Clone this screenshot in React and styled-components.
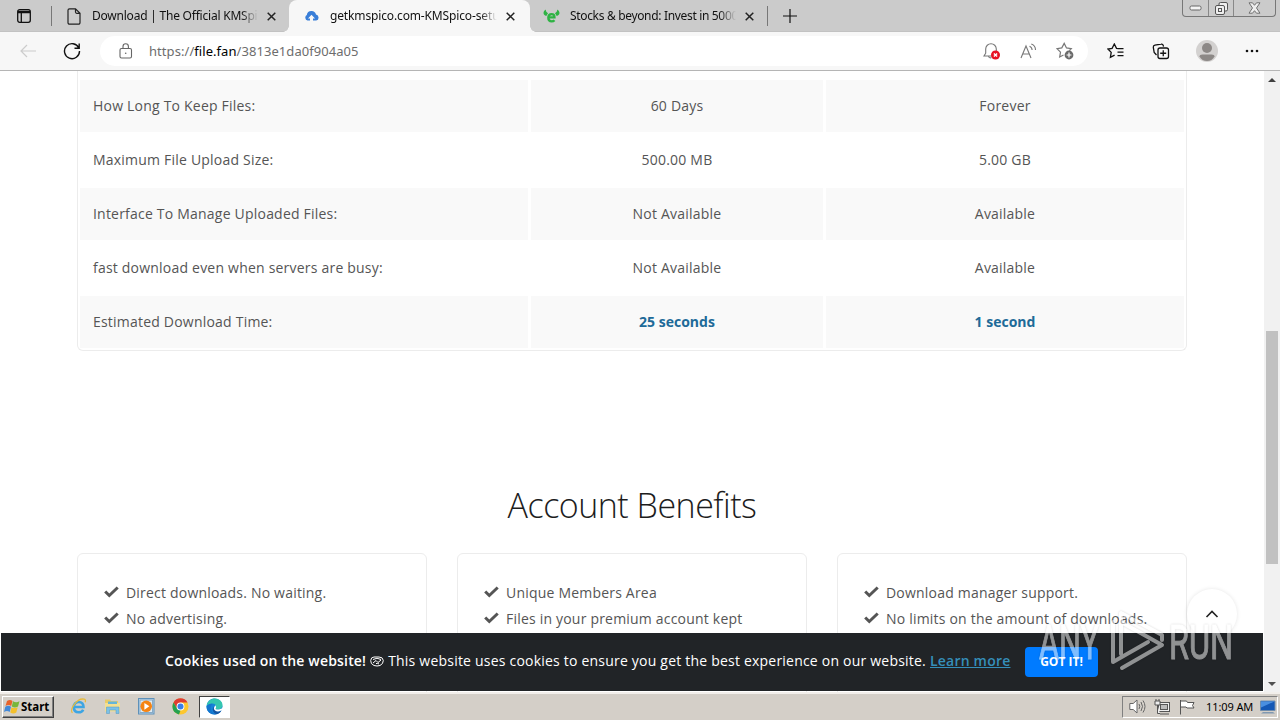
import styled, { createGlobalStyle } from 'styled-components'

const rows = [
  ['How Long To Keep Files:', '60 Days', 'Forever'],
  ['Maximum File Upload Size:', '500.00 MB', '5.00 GB'],
  ['Interface To Manage Uploaded Files:', 'Not Available', 'Available'],
  ['fast download even when servers are busy:', 'Not Available', 'Available'],
  ['Estimated Download Time:', '25 seconds', '1 second']
]

const benefits = [
  ['Direct downloads. No waiting.', 'No advertising.'],
  ['Unique Members Area', 'Files in your premium account kept'],
  ['Download manager support.', 'No limits on the amount of downloads.']
]

export default function App () {
  return (
    <Screen>
      <GlobalStyle />
      <TabBar />
      <Toolbar />
      <Viewport>
        <Page>
          <Table>
            {rows.map(([label, free, premium], i) => (
              <Row key={label} $striped={i % 2 === 0}>
                <Cell $left>{label}</Cell>
                <Cell $strong={i === 4}>{free}</Cell>
                <Cell $strong={i === 4}>{premium}</Cell>
              </Row>
            ))}
          </Table>
          <Heading>Account Benefits</Heading>
          <Cards>
            {benefits.map(items => (
              <Card key={items[0]}>
                {items.map(item => (
                  <Benefit key={item}>
                    <CheckIcon />
                    {item}
                  </Benefit>
                ))}
              </Card>
            ))}
          </Cards>
          <ScrollTop>
            <svg width='14' height='10' viewBox='0 0 14 10' fill='none' stroke='#222' strokeWidth='1.6'>
              <path d='M1.5 8 7 2.5 12.5 8' />
            </svg>
          </ScrollTop>
          <CookieBar>
            <CookieText>
              <CookieTitle>Cookies used on the website!</CookieTitle>
              <CookieIcon />
              <CookieMessage>This website uses cookies to ensure you get the best experience on our website.</CookieMessage>
              <LearnMore>Learn more</LearnMore>
            </CookieText>
            <GotIt>GOT IT!</GotIt>
          </CookieBar>
        </Page>
        <ScrollBar>
          <Arrow viewBox='0 0 8 4'><path d='M0 4 4 0 8 4Z' fill='#404040' /></Arrow>
          <Track><Thumb /></Track>
          <Arrow viewBox='0 0 8 4'><path d='M0 0 4 4 8 0Z' fill='#505050' /></Arrow>
        </ScrollBar>
      </Viewport>
      <Taskbar />
      <Watermark />
    </Screen>
  )
}

function TabBar () {
  return (
    <Tabs>
      <TabMenu>
        <svg width='14' height='14' viewBox='0 0 14 14' fill='none' stroke='#111' strokeWidth='1.3'>
          <rect x='.7' y='.7' width='12.6' height='12.6' rx='2' />
          <path d='M1 2.3h12M1 3.6h12M4.3 4v9' />
        </svg>
      </TabMenu>
      <Separator />
      <Tab $width={237} $icon={15}>
        <svg width='14' height='17' viewBox='0 0 14 17' fill='none' stroke='#222' strokeWidth='1.2'>
          <path d='M2.5.8h6L13 5.3v9.4a1.5 1.5 0 0 1-1.5 1.5h-9A1.5 1.5 0 0 1 1 14.7V2.3A1.5 1.5 0 0 1 2.5.8zM8.5.8v3.3a1.2 1.2 0 0 0 1.2 1.2H13' />
        </svg>
        <TabTitle $width={166} $gap={11} $spacing={-0.22}>Download | The Official KMSpico</TabTitle>
        <CloseIcon />
      </Tab>
      <Tab $active $width={241} $icon={15}>
        <svg width='15' height='11' viewBox='0 0 15 11'>
          <path d='M3.5 9.5A3 3 0 0 1 2.8 4 4.7 4.7 0 0 1 12 3.6a3 3 0 0 1 .2 5.9H9V7.5h2L7.5 3.8 4 7.5h2v2z' fill='#397ed8' />
        </svg>
        <TabTitle $width={167} $gap={11} $spacing={-0.14}>getkmspico.com-KMSpico-setup</TabTitle>
        <CloseIcon />
      </Tab>
      <Tab $width={237} $icon={13}>
        <svg width='17' height='14' viewBox='0 0 17 14' fill='none'>
          <path d='M2.8.5C-.3 2.500-.3 5.800 3.300 7L5 4.200Q2.500 3 2.800.5zM14.200.5c3.100 2 3.100 5.300-.5 6.500L12 4.200q2.500-1.200 2.200-3.700z' fill='#2fb344' />
          <path d='M5.500 8.400h6c0-2-1.100-3.300-2.900-3.300-2 0-3.300 1.500-3.300 3.700s1.400 3.600 3.400 3.600c1.200 0 2.100-.4 2.800-1.200' stroke='#2fb344' strokeWidth='2.3' />
        </svg>
        <TabTitle $width={166} $gap={10} $spacing={-0.33}>Stocks &amp; beyond: Invest in 5000+</TabTitle>
        <CloseIcon />
      </Tab>
      <Separator />
      <NewTab>
        <svg width='14' height='14' viewBox='0 0 14 14' stroke='#111' strokeWidth='1.2'>
          <path d='M7 0v14M0 7h14' />
        </svg>
      </NewTab>
      <WindowButtons>
        <WindowButton $width={25}>
          <svg width='13' height='6' viewBox='0 0 13 6'><rect x='1' y='1' width='11' height='4' rx='1.5' fill='#f4f4f4' stroke='#666' /></svg>
        </WindowButton>
        <WindowButton $width={25}>
          <svg width='13' height='13' viewBox='0 0 13 13' fill='#eee' stroke='#555'>
            <rect x='4' y='.5' width='8.5' height='8.5' rx='1.5' />
            <rect x='.5' y='3.5' width='9' height='9' rx='1.5' />
            <rect x='3.5' y='6.5' width='3' height='3' />
          </svg>
        </WindowButton>
        <WindowButton $width={42}>
          <svg width='13' height='12' viewBox='0 0 13 12' fill='#eee' stroke='#666' strokeWidth='.9'>
            <path d='M1 .8h3.500l2 2.500 2-2.500H12L8.500 6l3.500 5.200H8.500l-2-2.500-2 2.500H1L4.500 6z' />
          </svg>
        </WindowButton>
      </WindowButtons>
    </Tabs>
  )
}

function Toolbar () {
  return (
    <ToolRow>
      <IconSlot $width={56}>
        <svg width='16' height='14' viewBox='0 0 16 14' fill='none' stroke='#ccc' strokeWidth='1.2'>
          <path d='M16 7H1M7 1 1 7l6 6' />
        </svg>
      </IconSlot>
      <IconSlot $width={31}>
        <svg width='18' height='18' viewBox='0 0 18 18' fill='none' stroke='#111' strokeWidth='1.4'>
          <path d='M15.8 6A7.5 7.5 0 1 0 16.5 9M16.2 1.5V6.3H11.5' />
        </svg>
      </IconSlot>
      <AddressBar>
        <svg width='14' height='16' viewBox='0 0 14 16' fill='none' stroke='#666' strokeWidth='1.1'>
          <rect x='1' y='5.5' width='11.5' height='9.5' rx='1.5' />
          <path d='M4 5.5V3.5a2.7 2.7 0 0 1 5.400 0v2' />
          <circle cx='6.7' cy='10.3' r='.8' fill='#666' stroke='none' />
        </svg>
        <Url>https://<b>file.fan</b>/3813e1da0f904a05</Url>
        <AddressIcons>
          <svg width='18' height='18' viewBox='0 0 18 18' fill='none' stroke='#777' strokeWidth='1.1'>
            <path d='M9 14H1l1.7-2.8V7a5.3 5.3 0 0 1 10.6 0v2M5.5 14a2 2 0 0 0 3 1.6' />
            <circle cx='12.5' cy='13' r='4.5' fill='#e81123' stroke='none' />
            <path d='m10.9 11.4 3.2 3.2m0-3.2-3.2 3.2' stroke='#fff' strokeWidth='1.4' />
          </svg>
          <svg width='17' height='17' viewBox='0 0 17 17' fill='none' stroke='#777' strokeWidth='1.1'>
            <path d='m1 15 5-12 5 12M2.9 11h6.2M9.5 3.2c1.8.8 2.6 2 2.6 3.8M11.3 1c2.8 1 4.2 3 4.2 6' />
          </svg>
          <svg width='18' height='18' viewBox='0 0 18 18' fill='none' stroke='#777' strokeWidth='1.2'>
            <path d='M7.5 13 3.7 15l.8-4.9L1 6.7l4.8-.8L8.2 1.4l2.3 4.5 4.8.8-2 2' />
            <circle cx='13' cy='13' r='4.4' fill='#6b6b6b' stroke='none' />
            <path d='M13 10.6v4.800M10.6 13h4.800' stroke='#fff' />
          </svg>
        </AddressIcons>
      </AddressBar>
      <ToolIcons>
        <svg width='18' height='16' viewBox='0 0 18 16' fill='none' stroke='#111' strokeWidth='1.3'>
          <path d='M11.5 5.7 9.5 5.3 7.3 1 5.1 5.3 1 6l3.2 3.4-.8 5 4.2-2.2M10 5.7h6.5M10.5 9.2h6M10.5 12.7h6' />
        </svg>
        <svg width='18' height='17' viewBox='0 0 18 17' fill='none' stroke='#111' strokeWidth='1.3'>
          <path d='M4.5 12 2.2 9.5 1.3 4.3a2 2 0 0 1 1.6-2.2L9 1.2a2 2 0 0 1 2.3 1.5l.2.9' />
          <rect x='6' y='5' width='10.5' height='10.5' rx='2' />
          <path d='M11.25 7.3v6M8.2 10.25h6' />
        </svg>
        <svg width='22' height='22' viewBox='0 0 22 22'>
          <circle cx='11' cy='11' r='11' fill='#d3d1d0' />
          <circle cx='11' cy='8' r='5' fill='#8c8886' />
          <path d='M3.5 16.5q0-2 3-2h9q3 0 3 2-2.5 4.5-7.5 4.5t-7.5-4.5z' fill='#8c8886' />
        </svg>
        <svg width='14' height='4' viewBox='0 0 14 4' fill='#111'>
          <circle cx='2' cy='2' r='1.3' /><circle cx='7' cy='2' r='1.3' /><circle cx='12' cy='2' r='1.3' />
        </svg>
      </ToolIcons>
    </ToolRow>
  )
}

function Taskbar () {
  return (
    <TaskRow>
      <StartButton>
        <svg width='16' height='15' viewBox='0 0 16 15'>
          <path d='M3 2q3-2 5.500 0L7.200 7Q4.500 5.200 1.500 7z' fill='#e8632b' />
          <path d='M9 2.300q3 1.800 6.500 0L14 7.500q-3 1.800-6.200 0z' fill='#78b63b' />
          <path d='M1.300 7.700Q4.300 5.900 7 7.700l-1.300 5.300Q3 11.200 0 13z' fill='#4389d8' />
          <path d='M7.500 8.200q3 1.800 6.200 0L12.300 13.500q-3 1.800-6 0z' fill='#f4c02c' />
        </svg>
        Start
      </StartButton>
      <TaskIcon $margin={16}>
        <svg width='17' height='17' viewBox='0 0 17 17' fill='none'>
          <path d='M4 9h9.500c0-3-1.700-5-4.700-5C5.700 4 3.800 6 3.800 9.300s2 5 4.900 5c2.100 0 3.700-.9 4.500-2.600' stroke='#3da5e3' strokeWidth='2.6' />
          <path d='M2.500 14.800C-1 12 7-.5 14.200 1.200c1.300.3 1.500 1.500 1 3' stroke='#e7bb3c' strokeWidth='1.3' />
        </svg>
      </TaskIcon>
      <TaskIcon $margin={17}>
        <svg width='17' height='17' viewBox='0 0 17 17'>
          <path d='M1 1.500h5l1 1.500h7V11H1z' fill='#e9cb67' />
          <path d='M1 5h15v8.500H1z' fill='#f3df91' />
          <path d='M4 3.500h9V6H4z' fill='#64b5d8' />
          <path d='M2.500 9h12.500v6.500h-3V12H5.500v3.500h-3z' fill='#7bc1e8' stroke='#5399c1' strokeWidth='.5' />
        </svg>
      </TaskIcon>
      <TaskIcon $margin={17}>
        <svg width='17' height='17' viewBox='0 0 17 17'>
          <rect x='.5' y='.5' width='15.5' height='15.5' fill='#b9d6ec' stroke='#5e91b9' />
          <rect x='2' y='2' width='12.5' height='12.5' fill='#dcebf5' stroke='#88aac5' />
          <circle cx='8.2' cy='8.3' r='5.8' fill='#f58413' />
          <path d='m6.400 5 5 3.300-5 3.400z' fill='#fff' />
        </svg>
      </TaskIcon>
      <TaskIcon $margin={17}>
        <svg width='17' height='17' viewBox='0 0 17 17'>
          <circle cx='8.5' cy='8.5' r='8' fill='#fdc72e' />
          <path d='M1.500 4.500A8 8 0 0 1 15.500 4.500H8.500v4.500L5 10.500z' fill='#df3d31' />
          <path d='M1.500 4.500 5 10.500l3.500 2-1.500 3.900A8 8 0 0 1 1.500 4.500z' fill='#25a150' />
          <circle cx='8.5' cy='8.5' r='3.9' fill='#fff' />
          <circle cx='8.5' cy='8.5' r='3' fill='#397fe9' />
        </svg>
      </TaskIcon>
      <ActiveTask>
        <svg width='17' height='17' viewBox='0 0 17 17'>
          <circle cx='8.5' cy='8.5' r='8' fill='#1683d8' />
          <path d='M.7 7C2 3 5 .5 8.700.5c4.500 0 7.800 3 7.800 6.600 0 3-2.200 4.400-4.500 4.400-2 0-3-.7-2.500-1.500 1-1.500.3-4.500-3-4.500C3.700 5.500 1.500 6.500.7 8z' fill='#35c6b0' />
          <path d='M6.500 6C3 9 5 15 10.500 16.200 6 17.500.3 14 .5 8.500 2 6.500 4.500 5.500 6.500 6z' fill='#1476ce' />
          <path d='M8 8.500c-1 3.500 3 6 7.300 4.200-1 1.800-2.700 3-4.500 3.500C7 15.500 5.500 11 8 8.500z' fill='#1355a3' />
          <path d='M9.200 7.300c1.300 1.300 1 2.400.4 3.200-.3 1 2.500 1.500 4.700.5l2.700-1v2l-2.400.7c-3 1.700-6.800.1-6.700-2.700z' fill='#fff' />
        </svg>
      </ActiveTask>
      <Tray>
        <svg width='17' height='15' viewBox='0 0 17 15' fill='#fff' stroke='#666'>
          <path d='M.8 4.500h3.400L8 1v13l-3.800-3.500H.8z' />
          <path d='M10 5q1.500 2.500 0 5M12 3q3 4.500 0 9M14 1.500q4 6 0 12' fill='none' />
        </svg>
        <svg width='17' height='16' viewBox='0 0 17 16' fill='#eee' stroke='#555'>
          <rect x='4.5' y='3.5' width='11' height='9' />
          <rect x='6.5' y='5.5' width='7' height='5' fill='#bbb' />
          <path d='M6 15h9M1 2h5v4H1zM2 0v2M5 0v2M3.500 6v8.500H6' />
        </svg>
        <svg width='16' height='16' viewBox='0 0 16 16' fill='#fff' stroke='#555'>
          <path d='M1.500 1v14.500M1.500 2h6l1 1.500H15l-1.500 3L15 9H8L7 8H1.500z' />
        </svg>
        <Clock>11:09 AM</Clock>
        <svg width='16' height='14' viewBox='0 0 16 14'>
          <path d='M.5 1h14.500v9.500H.5z' fill='#1558b5' stroke='#718dac' />
          <path d='M1 1.500h13.500L1 7.500z' fill='#4a8fe0' />
          <path d='M3 12h10l2 1.500H1z' fill='#8098b0' />
        </svg>
      </Tray>
    </TaskRow>
  )
}

function CloseIcon () {
  return (
    <svg width='9' height='9' viewBox='0 0 9 9' stroke='#222' strokeWidth='1.5'>
      <path d='m.7.7 7.600 7.600M8.300.7.7 8.300' />
    </svg>
  )
}

function CheckIcon () {
  return (
    <svg width='15' height='12' viewBox='0 0 15 12' fill='none' stroke='#555' strokeWidth='3'>
      <path d='M1.200 5.500 5.300 9.500 13.700 1.500' />
    </svg>
  )
}

function CookieIcon () {
  return (
    <svg width='14' height='11' viewBox='0 0 14 11' fill='none' stroke='#fff' strokeWidth='1'>
      <path d='M4 1Q1 1 .7 4.500T4 9.500q3 1 6 0 3.300-1.500 3.300-5Q13 1 9 1zM3 3.500q4-2.500 8 0M3 7l3-2.500 2 2 3-2.500M6 8l1-1 2 1' />
    </svg>
  )
}

function Watermark () {
  return (
    <Mark viewBox='0 0 200 64'>
      <g fill='#fff' stroke='#fff' strokeWidth='1' fontFamily='Roboto, sans-serif' fontSize='48'>
        <text x='1' y='51' textLength='60' lengthAdjust='spacingAndGlyphs'>ANY</text>
        <text x='131' y='51' textLength='64' lengthAdjust='spacingAndGlyphs'>RUN</text>
      </g>
      <g fill='none' stroke='#fff' strokeWidth='4' strokeLinejoin='round' strokeLinecap='round'>
        <path d='M83 46V14L124 37 84 60M75 14v40L110 34M83 14V5L124 27v5' />
      </g>
    </Mark>
  )
}

const GlobalStyle = createGlobalStyle`
  * {
    box-sizing: border-box;
  }
  body {
    margin: 0;
    overflow: hidden;
  }
  svg {
    flex: none;
    display: block;
  }
`

const Screen = styled.div`
  position: relative;
  display: flex;
  flex-direction: column;
  width: 1280px;
  height: 720px;
  overflow: hidden;
  font-family: 'Open Sans', sans-serif;
  background: #fff;
`

const Tabs = styled.div`
  display: flex;
  align-items: center;
  height: 32px;
  flex: none;
  background: #cbcbcb;
  border-bottom: 1px solid #c2c2c2;
`

const TabMenu = styled.div`
  width: 51px;
  padding-left: 17px;
`

const Separator = styled.div`
  width: 1px;
  height: 20px;
  background: #777;
`

const Tab = styled.div`
  position: relative;
  display: flex;
  align-items: center;
  align-self: stretch;
  width: ${p => p.$width}px;
  height: 32px;
  padding-left: ${p => p.$icon}px;
  border-radius: 8px 8px 0 0;
  background: ${p => p.$active ? '#f7f7f7' : 'transparent'};

  /* curved feet on both sides of the active tab */
  &::before,
  &::after {
    content: '';
    display: ${p => p.$active ? 'block' : 'none'};
    position: absolute;
    bottom: 0;
    width: 6px;
    height: 6px;
  }
  &::before {
    left: -6px;
    background: radial-gradient(circle at 0 0, transparent 5.5px, #f7f7f7 6px);
  }
  &::after {
    right: -6px;
    background: radial-gradient(circle at 100% 0, transparent 5.5px, #f7f7f7 6px);
  }
`

const TabTitle = styled.span`
  width: ${p => p.$width}px;
  margin-left: ${p => p.$gap}px;
  margin-right: 9px;
  overflow: hidden;
  white-space: nowrap;
  font: 12px/18px 'Noto Sans', sans-serif;
  letter-spacing: ${p => p.$spacing}px;
  color: #111;
  mask-image: linear-gradient(to right, #000 90%, transparent);
`

const NewTab = styled.div`
  padding-left: 15px;
`

const WindowButtons = styled.div`
  display: flex;
  align-self: flex-start;
  height: 17px;
  margin-left: auto;
  margin-right: 4px;
  border: 1px solid #777;
  border-top: 0;
  border-radius: 0 0 4px 4px;
`

const WindowButton = styled.div`
  display: flex;
  align-items: center;
  justify-content: center;
  width: ${p => p.$width}px;

  & + & {
    border-left: 1px solid #888;
  }
`

const ToolRow = styled.div`
  display: flex;
  align-items: center;
  height: 39px;
  flex: none;
  background: #f7f7f7;
  border-bottom: 1px solid #b5b5b5;
`

const IconSlot = styled.div`
  display: flex;
  justify-content: center;
  width: ${p => p.$width}px;
`

const AddressBar = styled.div`
  display: flex;
  align-items: center;
  width: 988px;
  height: 30px;
  margin-left: 13px;
  padding: 0 14px 0 19px;
  border-radius: 15px;
  background: #fff;
`

const Url = styled.span`
  margin-left: 16px;
  font: 13px/20px 'Noto Sans', sans-serif;
  letter-spacing: 0.06px;
  white-space: nowrap;
  color: #6d6d6d;

  b {
    font-weight: 400;
    color: #000;
  }
`

const AddressIcons = styled.div`
  display: flex;
  align-items: center;
  gap: 19px;
  margin-left: auto;
`

const ToolIcons = styled.div`
  display: flex;
  align-items: center;
  justify-content: space-between;
  width: 152px;
  margin-left: 19px;
`

const Viewport = styled.div`
  display: flex;
  height: 621px;
  flex: none;
`

const Page = styled.div`
  position: relative;
  width: 1264px;
  height: 621px;
  padding: 0 77px;
  overflow: hidden;
`

const Table = styled.div`
  width: 1110px;
  height: 280px;
  padding: 9px 2px 0;
  border: 1px solid #ececec;
  border-top: 0;
  border-radius: 0 0 6px 6px;
`

const Row = styled.div`
  display: grid;
  grid-template-columns: 448px 292px 358px;
  column-gap: 3px;
  height: 52px;
  margin-bottom: 2px;

  & > div {
    background: ${p => p.$striped ? '#f9f9f9' : '#fff'};
  }
`

const Cell = styled.div`
  display: flex;
  align-items: center;
  justify-content: ${p => p.$left ? 'flex-start' : 'center'};
  padding-left: ${p => p.$left ? 13 : 0}px;
  padding-bottom: 2px;
  font-size: 14px;
  font-weight: ${p => p.$strong ? 700 : 400};
  letter-spacing: ${p => p.$strong ? 0 : 0.21}px;
  color: ${p => p.$strong ? '#206a98' : '#555'};
`

const Heading = styled.h2`
  margin: 129px 0 0;
  height: 50px;
  line-height: 50px;
  text-align: center;
  font-size: 34px;
  font-weight: 300;
  letter-spacing: -0.5px;
  color: #1d1d1d;
`

const Cards = styled.div`
  display: grid;
  grid-template-columns: repeat(3, 350px);
  gap: 30px;
  margin-top: 23px;
`

const Card = styled.div`
  height: 160px;
  padding: 25px 26px;
  border: 1px solid #ececec;
  border-radius: 6px;
`

const Benefit = styled.div`
  display: flex;
  align-items: center;
  gap: 7px;
  height: 26px;
  white-space: nowrap;
  font-size: 14px;
  letter-spacing: 0.2px;
  color: #555;
`

const ScrollTop = styled.div`
  position: absolute;
  top: 518px;
  left: 1187px;
  display: flex;
  align-items: center;
  justify-content: center;
  width: 50px;
  height: 50px;
  border-radius: 50%;
  background: #fff;
  box-shadow: 0 0 4px rgba(0, 0, 0, 0.1);
`

const CookieBar = styled.div`
  position: absolute;
  left: 1px;
  right: 1px;
  bottom: 1px;
  display: flex;
  align-items: center;
  height: 58px;
  padding-left: 164px;
  background: #212427;
`

const CookieText = styled.div`
  display: flex;
  align-items: center;
  width: 846px;
  padding-bottom: 2px;
  white-space: nowrap;
  font-size: 14px;
  line-height: 20px;
  letter-spacing: 0.21px;
  color: #fff;
`

const CookieTitle = styled.b`
  margin-right: 4px;
  font-weight: 600;
  letter-spacing: 0.18px;
`

const CookieMessage = styled.span`
  margin-left: 4px;
`

const LearnMore = styled.span`
  margin-left: 4px;
  font-weight: 600;
  color: #358fba;
  text-decoration: underline;
`

const GotIt = styled.div`
  width: 73px;
  height: 30px;
  margin-left: 14px;
  border-radius: 4px;
  background: #007bff;
  color: #fff;
  font-size: 12px;
  font-weight: 700;
  line-height: 30px;
  text-align: center;
`

const ScrollBar = styled.div`
  display: flex;
  flex-direction: column;
  align-items: center;
  width: 16px;
  padding: 7px 0 6px;
  background: #f1f1f1;
`

const Arrow = styled.svg`
  width: 8px;
  height: 4px;
`

const Track = styled.div`
  flex: 1;
  padding-top: 249px;
`

const Thumb = styled.div`
  width: 12px;
  height: 233px;
  background: #c1c1c1;
`

const TaskRow = styled.div`
  display: flex;
  align-items: center;
  height: 28px;
  flex: none;
  padding: 0 2px 1px;
  border-top: 2px solid #f2efeb;
  background: #d4cfc8;
`

const StartButton = styled.div`
  display: flex;
  align-items: center;
  gap: 1px;
  width: 52px;
  height: 22px;
  padding-left: 1px;
  border: 1px solid;
  border-color: #fff #404040 #404040 #fff;
  box-shadow: inset -1px -1px #808080;
  font: bold 11.5px 'Noto Sans', sans-serif;
  color: #000;
`

const TaskIcon = styled.div`
  margin-left: ${p => p.$margin}px;
`

const ActiveTask = styled.div`
  display: flex;
  align-items: center;
  justify-content: center;
  width: 31px;
  height: 22px;
  margin-left: 10px;
  border: 1px solid;
  border-color: #404040 #fff #fff #404040;
  background: #fff;
`

const Tray = styled.div`
  display: flex;
  align-items: center;
  gap: 8px;
  width: 156px;
  height: 22px;
  margin-left: auto;
  padding-left: 6px;
  border: 1px solid;
  border-color: #808080 #fff #fff #808080;
`

const Clock = styled.span`
  width: 46px;
  margin: 0 0 0 3px;
  white-space: nowrap;
  font: 11px 'Noto Sans', sans-serif;
  letter-spacing: -0.1px;
  color: #000;
`

const Mark = styled.svg`
  position: absolute;
  left: 1038px;
  top: 608px;
  width: 200px;
  height: 64px;
  opacity: 0.5;
  filter: drop-shadow(0 0 1px rgba(0, 0, 0, 0.3));
`
